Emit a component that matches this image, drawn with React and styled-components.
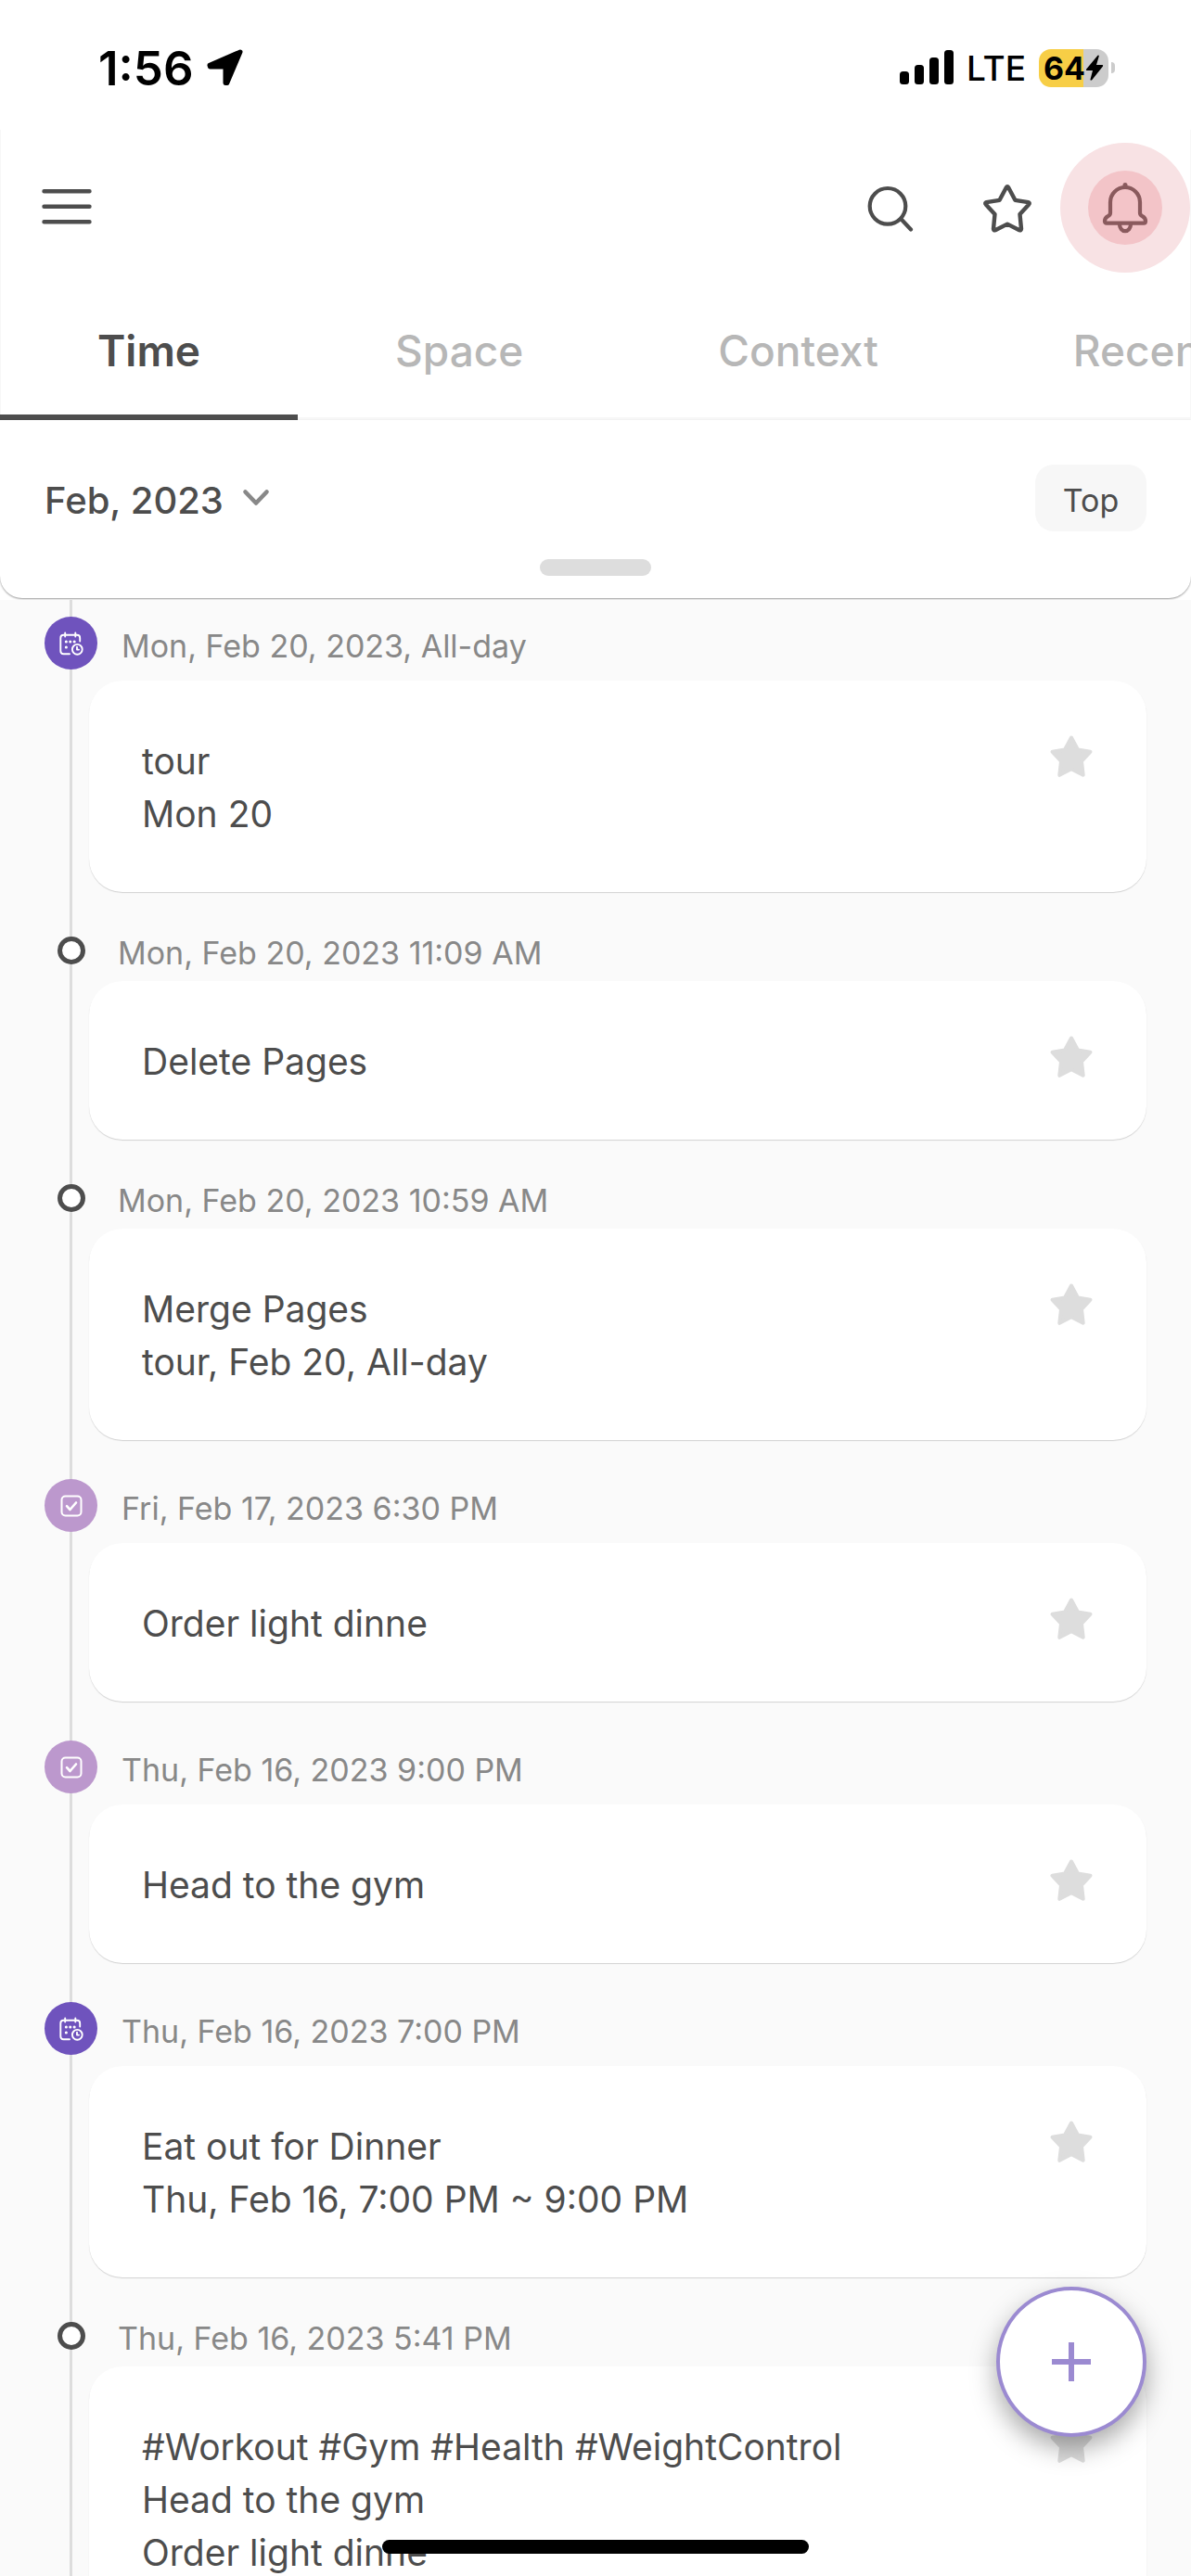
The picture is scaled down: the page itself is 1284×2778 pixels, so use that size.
import React from "react";
import styled, { createGlobalStyle } from "styled-components";

const ink = "#4d4d4d";
const muted = "#888888";
const line = "#dddddd";

const GlobalStyle = createGlobalStyle`
  *, *::before, *::after { box-sizing: border-box; }
  body {
    margin: 0;
    background: #fff;
    color: ${ink};
    font-family: Inter, "Liberation Sans", sans-serif;
  }
  button { font: inherit; color: inherit; background: none; border: 0; padding: 0; }
  h1, h2, p, ul { margin: 0; padding: 0; }
`;

const Screen = styled.div`
  display: flex;
  flex-direction: column;
  height: 100vh;
  overflow: hidden;
`;

const StatusBar = styled.div`
  flex: none;
  display: flex;
  align-items: center;
  justify-content: space-between;
  height: 140px;
  padding: 6px 82px 0 106px;
  color: #000;
`;

const StatusGroup = styled.div`
  display: flex;
  align-items: center;
  gap: 14px;
`;

const Clock = styled.span`
  font-size: 51px;
  font-weight: 600;
`;

const Network = styled.span`
  font-size: 37px;
  font-weight: 500;
`;

const Battery = styled.span`
  display: flex;
  align-items: center;
  gap: 3px;
`;

const BatteryBody = styled.span`
  display: flex;
  align-items: center;
  justify-content: center;
  width: 75px;
  height: 41px;
  border-radius: 13px;
  background: linear-gradient(to right, #f7ce46 64%, #cccccc 64%);
  font-size: 34px;
  font-weight: 700;
`;

const BatteryCap = styled.span`
  width: 4px;
  height: 12px;
  border-radius: 0 6px 6px 0;
  background: #cccccc;
`;

const Header = styled.header`
  flex: none;
  border: solid #f7f7f7;
  border-width: 0 1px;
`;

const Toolbar = styled.div`
  display: flex;
  align-items: center;
  justify-content: space-between;
  height: 168px;
  padding: 0 30px 0 31px;
`;

const ToolGroup = styled.div`
  display: flex;
  gap: 47px;
`;

const ToolButton = styled.button`
  display: flex;
  align-items: center;
  justify-content: center;
  width: 80px;
  height: 80px;
  border-radius: 50%;
  color: ${(p) => (p.$alert ? "#8a5a5d" : ink)};
  background: ${(p) => (p.$alert ? "#f3c4c8" : "none")};
  box-shadow: ${(p) => (p.$alert ? "0 0 0 30px #f8e2e4" : "none")};
`;

const Tabs = styled.nav`
  display: flex;
  overflow: hidden;
  height: 145px;
  margin: 0 -1px;
  box-shadow: inset 0 -3px #f7f7f7;
`;

const Tab = styled.button`
  flex: none;
  padding: 0 105px;
  border-bottom: 6px solid ${(p) => (p.$active ? ink : "transparent")};
  color: ${(p) => (p.$active ? ink : "#b7b7b7")};
  font-size: 46px;
  font-weight: ${(p) => (p.$active ? 600 : 500)};
`;

const FilterWrap = styled.div`
  flex: none;
  padding-bottom: 2px;
  background: #fff;
`;

const FilterPanel = styled.section`
  display: flex;
  flex-direction: column;
  align-items: center;
  gap: 30px;
  padding: 48px 48px 24px;
  border-radius: 0 0 24px 24px;
  background: #fff;
  box-shadow: 0 1px 2px rgba(0, 0, 0, 0.4);
`;

const FilterRow = styled.div`
  display: flex;
  align-items: center;
  justify-content: space-between;
  width: 100%;
`;

const MonthButton = styled.button`
  display: flex;
  align-items: center;
  gap: 18px;
  padding-top: 4px;
  font-size: 40px;
  font-weight: 500;
`;

const TopButton = styled.button`
  height: 72px;
  min-width: 120px;
  padding: 4px 24px 0;
  border-radius: 20px;
  background: #f7f7f7;
  font-size: 34px;
`;

const Handle = styled.div`
  width: 120px;
  height: 18px;
  border-radius: 9px;
  background: ${line};
`;

const Timeline = styled.ul`
  flex: 1;
  min-height: 0;
  overflow: hidden;
  display: flex;
  flex-direction: column;
  gap: 42px;
  padding: 18px 48px 0;
  list-style: none;
  background: linear-gradient(${line}, ${line}) 75px 0 / 3px 100% no-repeat #fafafa;
`;

const Entry = styled.li`
  flex: none;
`;

const EntryHead = styled.div`
  display: flex;
  align-items: center;
  gap: ${(p) => (p.$plain ? "22px" : "26px")};
  padding: ${(p) => (p.$plain ? "6px 0 18px" : "0 0 12px")};
`;

const MarkerSlot = styled.span`
  display: flex;
  justify-content: center;
  width: 57px;
`;

const Dot = styled.span`
  width: 30px;
  height: 30px;
  border: 5px solid ${ink};
  border-radius: 50%;
  background: #fff;
`;

const Badge = styled.span`
  display: flex;
  align-items: center;
  justify-content: center;
  width: 57px;
  height: 57px;
  border-radius: 50%;
  color: #fff;
  background: ${(p) => (p.$kind === "event" ? "#6f53bd" : "#bc98cd")};
`;

const When = styled.time`
  padding-top: 6px;
  color: ${muted};
  font-size: 34px;
  line-height: 24px;
`;

const Card = styled.article`
  display: flex;
  align-items: flex-start;
  justify-content: space-between;
  margin-left: 48px;
  padding: 58px 57px 56px;
  border-radius: 36px;
  background: #fff;
  box-shadow: 0 1px 1px rgba(0, 0, 0, 0.16);
`;

const CardText = styled.div`
  font-size: 39px;
  line-height: 57px;
`;

const StarButton = styled.button`
  display: flex;
  color: ${line};
`;

const AddButton = styled.button`
  position: fixed;
  right: 48px;
  bottom: 150px;
  display: flex;
  align-items: center;
  justify-content: center;
  width: 162px;
  height: 162px;
  border: 4px solid #9b8ad1;
  border-radius: 50%;
  color: #9b8ad1;
  background: #fff;
  box-shadow: 0 12px 28px rgba(0, 0, 0, 0.34);
`;

const HomeIndicator = styled.div`
  position: fixed;
  bottom: 24px;
  left: 50%;
  width: 460px;
  height: 15px;
  margin-left: -230px;
  border-radius: 8px;
  background: #000;
`;

const stroke = {
  fill: "none",
  stroke: "currentColor",
  strokeLinecap: "round",
  strokeLinejoin: "round",
  "aria-hidden": true,
};

const LocationIcon = () => (
  <svg width="40" height="40" viewBox="0 0 40 40" aria-hidden="true">
    <path d="M36 3 3 17.4 3.4 19H20V36.4L21.8 36.6Z" fill="#000" stroke="#000" strokeWidth="5" strokeLinejoin="round" />
  </svg>
);

const SignalIcon = () => (
  <svg width="58" height="38" viewBox="0 0 58 38" aria-hidden="true">
    <rect x="0" y="23" width="10" height="14" rx="3.5" />
    <rect x="16" y="16" width="10" height="21" rx="3.5" />
    <rect x="32" y="8" width="10" height="29" rx="3.5" />
    <rect x="48" y="0" width="10" height="37" rx="3.5" />
  </svg>
);

const BoltIcon = () => (
  <svg width="20" height="28" viewBox="0 0 20 28" aria-hidden="true">
    <path d="M13.5 .8 1 15.8Q.5 17 1.8 17H8L5.4 27Q6 28 7.2 27.2L19 12.4Q19.6 11 18.2 11H12L14.8 1.4Q14.6.2 13.5.8Z" />
  </svg>
);

const MenuIcon = () => (
  <svg width="56" height="40" viewBox="0 0 56 40" strokeWidth="4.4" {...stroke}>
    <path d="M3.5 2.3H52.5M3.5 18.8H52.5M3.5 35.3H52.5" />
  </svg>
);

const SearchIcon = () => (
  <svg width="52" height="52" viewBox="0 0 52 52" strokeWidth="4.2" {...stroke}>
    <circle cx="24" cy="24.3" r="19.3" />
    <path d="M38.7 38.5 49 49.5" />
  </svg>
);

const StarOutlineIcon = () => (
  <svg width="56" height="56" viewBox="0 -1 56 56" strokeWidth="4.4" {...stroke}>
    <path d="M26.8 5.2Q28 3.4 29.2 5.2L36.4 18.8 50.6 21.2Q52.6 21.8 51.2 23.4L41.5 34 43 49.8Q42.8 51.8 41 51.2L28 44.6 15 51.2Q13.2 51.8 13 49.8L14.5 34 4.8 23.4Q3.4 21.8 5.4 21.2L19.6 18.8Z" />
  </svg>
);

const BellIcon = () => (
  <svg width="56" height="60" viewBox="0 -1 56 60" strokeWidth="4.2" {...stroke}>
    <path d="M12 23a16 16 0 0 1 32 0V34.5Q44 37 46.5 38.2 50 40 50 43.5 50 45.6 48 45.6H8Q6 45.6 6 43.5 6 40 9.5 38.2 12 37 12 34.5Z" />
    <path d="M28 4.5V6" strokeWidth="5" />
    <path d="M22 47a6 7.2 0 0 0 12 0" />
  </svg>
);

const ChevronIcon = () => (
  <svg width="34" height="24" viewBox="0 0 34 24" strokeWidth="4.6" {...stroke} stroke={muted}>
    <path d="M5.5 3.5 17 15.5 28.5 3.5" />
  </svg>
);

const StarIcon = () => (
  <svg width="48" height="48" viewBox="0 0 48 48" aria-hidden="true">
    <path
      d="M24 3.500 31 16.500 44.500 18.700 35 29 36.700 43.800 24 37.300 11.300 43.800 13 29 3.500 18.700 17 16.500Z"
      fill="currentColor"
      stroke="currentColor"
      strokeWidth="4"
      strokeLinejoin="round"
    />
  </svg>
);

const PlusIcon = () => (
  <svg width="42" height="42" viewBox="0 0 42 42" aria-hidden="true">
    <path d="M21 0V42M0 21H42" stroke="currentColor" strokeWidth="6" />
  </svg>
);

const EventIcon = () => (
  <svg width="28" height="28" viewBox="0 0 28 28" strokeWidth="1.9" {...stroke}>
    <path d="M12 25.2H5.5Q2.3 25.2 2.3 22V8Q2.3 4.8 5.5 4.8H20Q23.2 4.8 23.2 8V11.5M7.2 2.5V6.5M18.3 2.5V6.5" />
    <circle cx="20.3" cy="20.3" r="5.4" />
    <path d="M20 17.8V20.6H22" />
    <path d="M8.3 12h.1M12.7 12h.1M17.1 12h.1M8.3 18h.1" strokeWidth="3" />
  </svg>
);

const TaskIcon = () => (
  <svg width="28" height="28" viewBox="0 0 28 28" strokeWidth="2" {...stroke}>
    <rect x="3.5" y="3.5" width="21" height="21" rx="4" />
    <path d="M9 14.2 12.5 18 19 10.5" strokeWidth="2.6" />
  </svg>
);

const tabs = ["Time", "Space", "Context", "Recent"];

const entries = [
  { kind: "event", when: "Mon, Feb 20, 2023, All-day", lines: ["tour", "Mon 20"] },
  { kind: "note", when: "Mon, Feb 20, 2023 11:09 AM", lines: ["Delete Pages"] },
  { kind: "note", when: "Mon, Feb 20, 2023 10:59 AM", lines: ["Merge Pages", "tour, Feb 20, All-day"] },
  { kind: "task", when: "Fri, Feb 17, 2023 6:30 PM", lines: ["Order light dinne"] },
  { kind: "task", when: "Thu, Feb 16, 2023 9:00 PM", lines: ["Head to the gym"] },
  { kind: "event", when: "Thu, Feb 16, 2023 7:00 PM", lines: ["Eat out for Dinner", "Thu, Feb 16, 7:00 PM ~ 9:00 PM"] },
  {
    kind: "note",
    when: "Thu, Feb 16, 2023 5:41 PM",
    lines: ["#Workout #Gym #Health #WeightControl", "Head to the gym", "Order light dinne"],
  },
];

function Marker({ kind }) {
  return (
    <MarkerSlot>
      {kind === "note" ? <Dot /> : <Badge $kind={kind}>{kind === "event" ? <EventIcon /> : <TaskIcon />}</Badge>}
    </MarkerSlot>
  );
}

export default function App() {
  return (
    <Screen>
      <GlobalStyle />
      <StatusBar>
        <StatusGroup>
          <Clock>1:56</Clock>
          <LocationIcon />
        </StatusGroup>
        <StatusGroup>
          <SignalIcon />
          <Network>LTE</Network>
          <Battery>
            <BatteryBody>
              64
              <BoltIcon />
            </BatteryBody>
            <BatteryCap />
          </Battery>
        </StatusGroup>
      </StatusBar>

      <Header>
        <Toolbar>
          <ToolButton aria-label="Menu"><MenuIcon /></ToolButton>
          <ToolGroup>
            <ToolButton aria-label="Search"><SearchIcon /></ToolButton>
            <ToolButton aria-label="Starred"><StarOutlineIcon /></ToolButton>
            <ToolButton aria-label="Notifications" $alert><BellIcon /></ToolButton>
          </ToolGroup>
        </Toolbar>
        <Tabs>
          {tabs.map((name, i) => (
            <Tab key={name} $active={i === 0}>{name}</Tab>
          ))}
        </Tabs>
      </Header>

      <FilterWrap>
        <FilterPanel>
          <FilterRow>
            <MonthButton>
              Feb, 2023
              <ChevronIcon />
            </MonthButton>
            <TopButton>Top</TopButton>
          </FilterRow>
          <Handle />
        </FilterPanel>
      </FilterWrap>

      <Timeline>
        {entries.map((entry) => (
          <Entry key={entry.when}>
            <EntryHead $plain={entry.kind === "note"}>
              <Marker kind={entry.kind} />
              <When>{entry.when}</When>
            </EntryHead>
            <Card>
              <CardText>
                {entry.lines.map((text) => (
                  <p key={text}>{text}</p>
                ))}
              </CardText>
              <StarButton aria-label="Star this entry"><StarIcon /></StarButton>
            </Card>
          </Entry>
        ))}
      </Timeline>

      <AddButton aria-label="Add entry"><PlusIcon /></AddButton>
      <HomeIndicator />
    </Screen>
  );
}
